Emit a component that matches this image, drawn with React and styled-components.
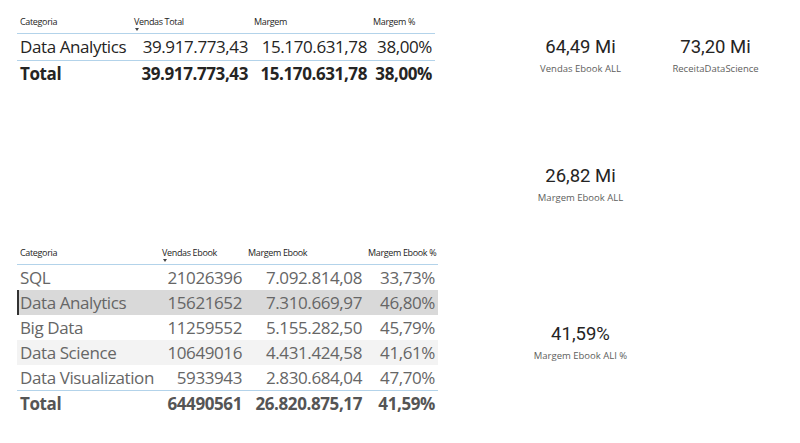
import React from 'react'
import styled, { createGlobalStyle } from 'styled-components'

const GlobalStyle = createGlobalStyle`
  html, body {
    margin: 0;
    padding: 0;
    background: #fff;
  }
  body {
    font-family: 'Open Sans', 'Noto Sans', sans-serif;
    color: #252423;
  }
`

const salesTable = {
  columns: ['Categoria', 'Vendas Total', 'Margem', 'Margem %'],
  widths: '114px 120px 119px 65px',
  rows: [['Data Analytics', '39.917.773,43', '15.170.631,78', '38,00%']],
  total: ['Total', '39.917.773,43', '15.170.631,78', '38,00%'],
}

const ebookTable = {
  columns: ['Categoria', 'Vendas Ebook', 'Margem Ebook', 'Margem Ebook %'],
  widths: '142px 86px 120px 73px',
  rows: [
    ['SQL', '21026396', '7.092.814,08', '33,73%'],
    ['Data Analytics', '15621652', '7.310.669,97', '46,80%'],
    ['Big Data', '11259552', '5.155.282,50', '45,79%'],
    ['Data Science', '10649016', '4.431.424,58', '41,61%'],
    ['Data Visualization', '5933943', '2.830.684,04', '47,70%'],
  ],
  total: ['Total', '64490561', '26.820.875,17', '41,59%'],
  selected: 1,
  striped: 3,
}

const Page = styled.div`
  width: 800px;
  height: 443px;
  display: flex;
  overflow: hidden;
`

const LeftColumn = styled.div`
  width: 460px;
  padding: 16px 0 0 17px;
  box-sizing: border-box;
  display: flex;
  flex-direction: column;
  gap: 161px;
`

const Table = styled.div`
  display: grid;
  grid-template-columns: ${p => p.$widths};
  width: max-content;
`

const HeadCell = styled.div`
  position: relative;
  font-size: 9px;
  letter-spacing: -0.35px;
  line-height: 12px;
  padding: 0 0 5px 3px;
  border-bottom: 1px solid #b3d3ea;
  color: #252423;
  white-space: nowrap;
`

const SortArrow = styled.span`
  position: absolute;
  left: 4px;
  top: 12px;
  width: 0;
  height: 0;
  border-left: 2.5px solid transparent;
  border-right: 2.5px solid transparent;
  border-top: 3px solid #444;
`

const Cell = styled.div`
  font-size: 17px;
  letter-spacing: -0.4px;
  line-height: 25px;
  height: 25px;
  white-space: nowrap;
  padding: 0 3px;
  text-align: ${p => (p.$first ? 'left' : 'right')};
  color: ${p => (p.$muted ? '#666' : '#252423')};
  background: ${p => p.$bg || 'transparent'};
  box-shadow: ${p => (p.$mark ? 'inset 2px 0 0 #333' : 'none')};
`

const TotalCell = styled(Cell)`
  font-weight: 700;
  border-top: 1px solid #b3d3ea;
  color: ${p => (p.$muted ? '#555' : '#252423')};
`

const DataTable = ({ data, rowHeight, muted }) => (
  <Table $widths={data.widths}>
    {data.columns.map((c, i) => (
      <HeadCell key={c}>
        {c}
        {i === 1 && <SortArrow />}
      </HeadCell>
    ))}
    {data.rows.map((row, r) => {
      const bg =
        r === data.selected ? '#d9d9d9' : r === data.striped ? '#f3f3f3' : null
      return row.map((v, i) => (
        <Cell
          key={r + '-' + i}
          $first={i === 0}
          $muted={muted}
          $bg={bg}
          $mark={r === data.selected && i === 0}
          style={rowHeight ? { height: rowHeight, lineHeight: rowHeight + 'px' } : null}
        >
          {v}
        </Cell>
      ))
    })}
    {data.total.map((v, i) => (
      <TotalCell key={'t' + i} $first={i === 0} $muted={muted}>
        {v}
      </TotalCell>
    ))}
  </Table>
)

const CardArea = styled.div`
  flex: 1;
  display: grid;
  grid-template-columns: 135px 135px;
  grid-template-rows: 129px 158px auto;
  padding: 36px 0 0 53px;
  box-sizing: border-box;
`

const Card = styled.div`
  display: flex;
  flex-direction: column;
  align-items: center;
`

const CardValue = styled.div`
  font-family: 'Roboto', 'DejaVu Sans', sans-serif;
  font-size: 18.5px;
  line-height: 22px;
  color: #252423;
`

const CardLabel = styled.div`
  font-size: 9.5px;
  line-height: 12px;
  margin-top: 5px;
  color: #605e5c;
  white-space: nowrap;
`

const cards = [
  ['64,49 Mi', 'Vendas Ebook ALL'],
  ['73,20 Mi', 'ReceitaDataScience'],
  ['26,82 Mi', 'Margem Ebook ALL'],
  null,
  ['41,59%', 'Margem Ebook ALI %'],
]

export default function App() {
  return (
    <Page>
      <GlobalStyle />
      <LeftColumn>
        <DataTable data={salesTable} rowHeight={26} />
        <DataTable data={ebookTable} muted />
      </LeftColumn>
      <CardArea>
        {cards.map((c, i) =>
          c ? (
            <Card key={i}>
              <CardValue>{c[0]}</CardValue>
              <CardLabel>{c[1]}</CardLabel>
            </Card>
          ) : (
            <div key={i} />
          ),
        )}
      </CardArea>
    </Page>
  )
}
